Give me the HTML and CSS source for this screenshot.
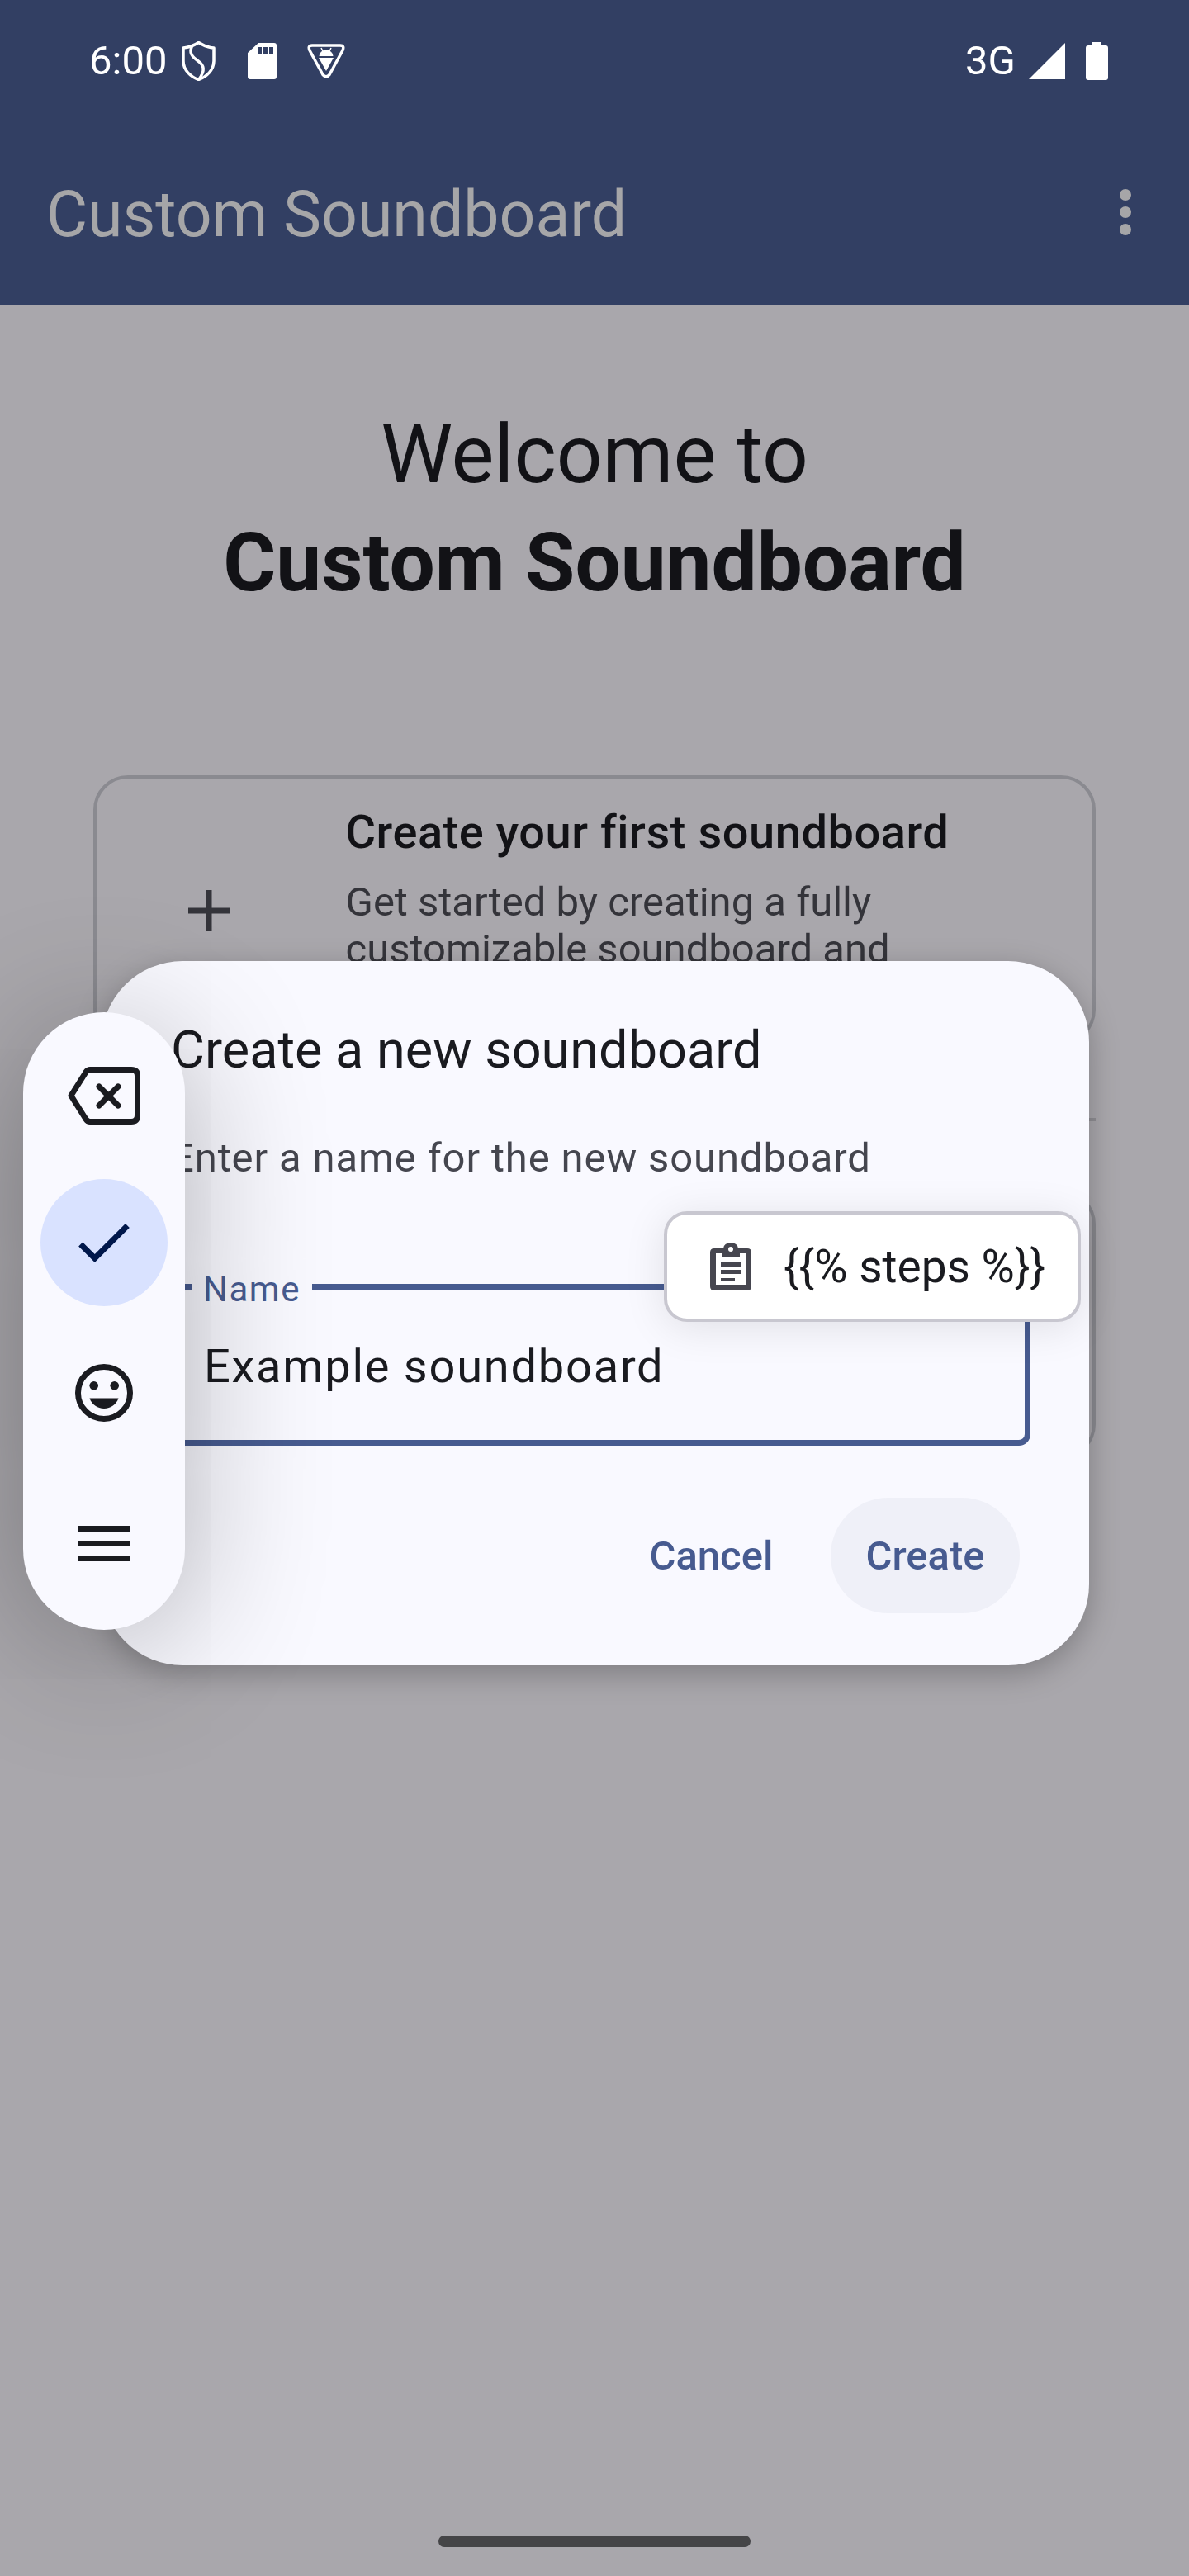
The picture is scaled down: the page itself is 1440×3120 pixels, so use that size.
FILE: index.html
```html
<!DOCTYPE html>
<html lang="en">
<head>
<meta charset="utf-8">
<title>Custom Soundboard</title>
<link rel="stylesheet" href="styles.css">
</head>
<body>
<div class="screen">
  <header class="appbar">
    <div class="status">
      <div class="status-left">
        <span class="clock">6:00</span>
        <svg class="si si-shield" viewBox="0 0 41 48"><path d="M20.500 1.500 C26 5 32 7.500 39 8 V24 C39 35 30 43 20.500 46.500 C11 43 2 35 2 24 V8 C9 7.500 15 5 20.500 1.500 Z" fill="none" stroke="#fff" stroke-width="3.500" stroke-linejoin="round"/><path d="M13 5 C8 14 13 19 20 24 C27 29 29 35 21 46" fill="none" stroke="#fff" stroke-width="3.500"/></svg>
        <svg class="si si-sd" viewBox="0 0 35 44"><path fill-rule="evenodd" fill="#fff" d="M13 0 H32 Q35 0 35 3 V41 Q35 44 32 44 H3 Q0 44 0 41 V12 Z M13 5 V13 H17 V5 Z M19 5 V13 H24 V5 Z M26 5 V13 H31 V5 Z"/></svg>
        <svg class="si si-tri" viewBox="0 0 46 42"><path d="M6 2 H40 Q45.500 2 43 8 L27 37.500 Q23 42 19 37.500 L3 8 Q0.500 2 6 2 Z" fill="none" stroke="#fff" stroke-width="3.500" stroke-linejoin="round"/><path fill="#fff" d="M14.500 15 A8.500 7.500 0 0 1 31.500 15 Z M14 17 H32 L23 33 Z"/><path stroke="#fff" stroke-width="1.500" d="M17 5 L19 9 M29 5 L27 9"/></svg>
      </div>
      <div class="status-right">
        <span class="net">3G</span>
        <svg class="si si-signal" viewBox="0 0 44 44"><path fill="#fff" d="M44 0 V44 H0 Z"/></svg>
        <svg class="si si-batt" viewBox="0 0 27 46"><path fill="#fff" d="M8 0 H19 V4 H24 Q27 4 27 7 V43 Q27 46 24 46 H3 Q0 46 0 43 V7 Q0 4 3 4 H8 Z"/></svg>
      </div>
    </div>
    <div class="toolbar">
      <h1 class="app-title">Custom Soundboard</h1>
      <div class="overflow"><i></i><i></i><i></i></div>
    </div>
  </header>

  <main class="content">
    <div class="hero">
      <p class="hero-light">Welcome to</p>
      <p class="hero-bold">Custom Soundboard</p>
    </div>
    <section class="card card-first">
      <svg class="plus" viewBox="0 0 50 50"><path d="M25 0 V50 M0 25 H50" stroke="#34343a" stroke-width="7"/></svg>
      <div class="card-text">
        <h2>Create your first soundboard</h2>
        <p>Get started by creating a fully customizable soundboard and</p>
      </div>
    </section>
    <div class="divider"></div>
    <section class="card card-second"></section>
  </main>

  <div class="dialog">
    <h2 class="dialog-title">Create a new soundboard</h2>
    <p class="dialog-sub">Enter a name for the new soundboard</p>
    <div class="field">
      <span class="field-label">Name</span>
      <span class="field-value">Example soundboard</span>
    </div>
    <div class="actions">
      <button class="btn">Cancel</button>
      <button class="btn btn-hover">Create</button>
    </div>
  </div>

  <aside class="float-bar">
    <span class="fb-item">
      <svg class="fb-icon" viewBox="0 0 88 70"><path d="M27 3.500 H77 Q84.500 3.500 84.500 11 V59 Q84.500 66.500 77 66.500 H27 Q24 66.500 22 63.500 L4 35 L22 6.500 Q24 3.500 27 3.500 Z" fill="none" stroke="#1a1b20" stroke-width="7" stroke-linejoin="round"/><path d="M38 24 L61 47 M61 24 L38 47" stroke="#1a1b20" stroke-width="7" stroke-linecap="round"/></svg>
    </span>
    <span class="fb-item fb-selected">
      <svg class="fb-check" viewBox="3.410 5.590 17.590 13.410"><path fill="#00174b" d="M9 16.170L4.830 12l-1.420 1.410L9 19 21 7l-1.410-1.410z"/></svg>
    </span>
    <span class="fb-item">
      <svg class="fb-smile" viewBox="0 0 70 70"><circle cx="35" cy="35" r="31.500" fill="none" stroke="#1a1b20" stroke-width="7"/><circle cx="22.700" cy="26.300" r="5.300" fill="#1a1b20"/><circle cx="47.700" cy="26.300" r="5.300" fill="#1a1b20"/><path d="M17.500 41.500 H52.500 C50 49 43 54 35 54 C27 54 20 49 17.500 41.500 Z" fill="#1a1b20"/></svg>
    </span>
    <span class="fb-item">
      <span class="fb-menu"><i></i><i></i><i></i></span>
    </span>
  </aside>

  <div class="clip">
    <svg class="clip-icon" viewBox="0 0 50 58"><path fill-rule="evenodd" fill="#46464f" d="M5 7 H16 A9 7 0 0 1 34 7 H45 Q50 7 50 12 V53 Q50 58 45 58 H5 Q0 58 0 53 V12 Q0 7 5 7 Z M7 13 V51 H43 V13 H36 V17 H14 V13 Z M25 5 A3 3 0 1 0 25.010 11 A3 3 0 1 0 25 5 Z M13 24 H37 V29 H13 Z M13 33 H37 V38 H13 Z M13 43 H30 V47 H13 Z"/></svg>
    <span class="clip-text">{{% steps %}}</span>
  </div>

  <div class="nav-pill"></div>
</div>
</body>
</html>
```
FILE: styles.css
```css
* { box-sizing: border-box; }
html, body { margin: 0; padding: 0; }
body { font-family: Roboto, sans-serif; background: #a9a7ac; }
.screen { position: relative; width: 1440px; height: 3120px; overflow: hidden; background: #a9a7ac; }

.appbar { height: 369px; background: #323f63; }
.status { height: 147px; padding: 0 98px 0 108px; display: flex; justify-content: space-between; }
.status-left, .status-right { display: flex; align-items: center; height: 147px; }
.clock, .net { color: #fff; font-size: 49px; line-height: 147px; }
.si { display: block; flex: none; }
.si-shield { width: 41px; height: 48px; margin-left: 18px; }
.si-sd { width: 35px; height: 44px; margin-left: 39px; }
.si-tri { width: 46px; height: 42px; margin-left: 37px; }
.si-signal { width: 44px; height: 44px; margin-left: 16px; }
.si-batt { width: 27px; height: 46px; margin-left: 25px; }

.toolbar { height: 222px; display: flex; align-items: center; justify-content: space-between; padding: 0 56px; }
.app-title { margin: 4px 0 0; font-size: 77px; font-weight: 400; color: #a6a6a8; line-height: 78px; }
.overflow { display: flex; flex-direction: column; gap: 7px; margin: -2px 14px 0 0; }
.overflow i { display: block; width: 14px; height: 14px; border-radius: 50%; background: #a6a6a8; }

.content { padding: 0 113px; display: flex; flex-direction: column; }
.hero { text-align: center; padding-top: 116px; }
.hero p { margin: 0; font-size: 98px; line-height: 131px; color: #121216; }
.hero-bold { font-weight: 700; }

.card { border: 4px solid #8a8a90; border-radius: 42px; width: 1214px; }
.card-first { margin-top: 192px; height: 326px; display: flex; padding: 30px 0 0 0; }
.plus { width: 50px; height: 50px; margin: 105px 0 0 110.5px; flex: none; }
.card-text { margin-left: 141px; width: 820px; }
.card-text h2 { margin: 0; font-size: 56px; font-weight: 500; line-height: 70px; letter-spacing: .525px; color: #121216; }
.card-text p { margin: 21px 0 0; font-size: 49px; line-height: 57px; color: #34343a; }
.divider { height: 4px; background: #8f8e93; margin-top: 89px; }
.card-second { margin-top: 83px; height: 326px; }

.dialog { position: absolute; left: 123px; top: 1164px; width: 1196px; height: 853px; background: #f9f9ff; border-radius: 98px; padding: 0 84px; box-shadow: 0 10px 36px rgba(0,0,0,.25); }
.dialog-title { margin: 0; padding-top: 73px; font-size: 63px; font-weight: 400; line-height: 70px; color: #1a1b20; }
.dialog-sub { margin: 61px 0 0; font-size: 49px; line-height: 70px; letter-spacing: .875px; color: #45464f; }

.field { position: relative; margin-top: 117px; width: 1041px; height: 196px; border: 7px solid #475b90; border-radius: 14px; }
.field-label { position: absolute; left: 18px; top: -28px; padding: 0 14px; background: #f9f9ff; font-size: 42px; line-height: 56px; letter-spacing: 1.5px; color: #475b90; }
.field-value { position: absolute; left: 33px; top: 51px; font-size: 56px; line-height: 84px; letter-spacing: 1.75px; color: #1a1b20; }

.actions { display: flex; justify-content: flex-end; gap: 27px; margin-top: 63px; }
.btn { height: 140px; padding: 0 42.5px; border: 0; border-radius: 70px; background: transparent; font-family: Roboto, sans-serif; font-size: 49px; font-weight: 500; color: #475b90; }
.btn-hover { background: #eff0f8; }

.float-bar { position: absolute; left: 28px; top: 1226px; width: 196px; height: 748px; border-radius: 98px; background: #f9f9ff; box-shadow: 0 20px 170px rgba(0,0,0,.3); display: flex; flex-direction: column; align-items: center; padding-top: 20px; gap: 28px; }
.fb-item { width: 154px; height: 154px; border-radius: 50%; display: flex; align-items: center; justify-content: center; flex: none; }
.fb-selected { background: #d9e2ff; }
.fb-icon { width: 88px; height: 70px; margin-top: 8px; }
.fb-check { width: 62px; height: 47px; }
.fb-smile { width: 70px; height: 70px; }
.fb-menu { display: flex; flex-direction: column; gap: 11px; }
.fb-menu i { display: block; width: 63px; height: 7px; background: #1a1b20; }

.clip { position: absolute; left: 804px; top: 1467px; width: 505px; height: 134px; background: #fff; border: 4px solid #c8c7d0; border-radius: 28px; display: flex; align-items: center; padding-left: 52px; box-shadow: 0 7px 50px rgba(0,0,0,.1); }
.clip-icon { width: 50px; height: 58px; flex: none; }
.clip-text { margin-left: 39px; font-size: 55px; color: #1a1b20; white-space: nowrap; }

.nav-pill { position: absolute; left: 531px; top: 3071px; width: 378px; height: 14px; border-radius: 7px; background: #454547; }
```
